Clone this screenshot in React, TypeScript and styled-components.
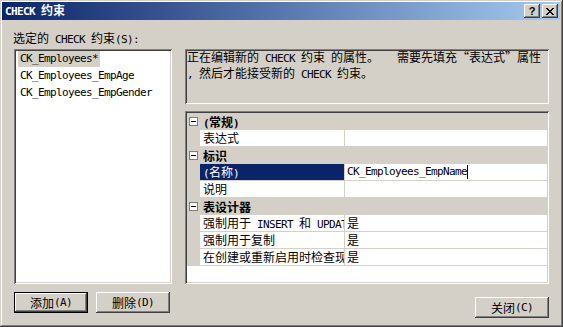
import React from 'react';
import styled, { createGlobalStyle } from 'styled-components';

const GlobalStyle = createGlobalStyle`
  html, body {
    margin: 0;
    padding: 0;
    background: #d4d0c8;
  }
  body {
    font-family: "Noto Sans CJK SC", "Liberation Sans", sans-serif;
    font-size: 12px;
    color: #000;
  }
`;

// Win2000 bevels
const sunken = `
  box-shadow: inset 1px 1px #808080, inset -1px -1px #ffffff,
    inset 2px 2px #404040, inset -2px -2px #d4d0c8;
`;
const raised = `
  box-shadow: inset -1px -1px #404040, inset 1px 1px #ffffff,
    inset -2px -2px #808080, inset 2px 2px #d4d0c8;
`;

const monoFont = `
  font-family: "DejaVu Sans Mono", "Liberation Mono", monospace;
  font-size: 11px;
  letter-spacing: -0.62px;
`;

const Window = styled.div`
  width: 563px;
  height: 327px;
  box-sizing: border-box;
  padding: 2px 3px 3px 2px;
  background: #d4d0c8;
  box-shadow: inset -1px -1px #404040, inset 1px 1px #d4d0c8,
    inset -2px -2px #808080, inset 2px 2px #ffffff;
  display: flex;
  flex-direction: column;
  overflow: hidden;
`;

const TitleBar = styled.div`
  height: 18px;
  display: flex;
  align-items: center;
  padding: 0 2px 0 3px;
  background: linear-gradient(to right, #0a246a, #a6caf0);
  color: #fff;
  font-weight: bold;
  line-height: 18px;
`;

const TitleText = styled.div`
  flex: 1;
  white-space: nowrap;
`;

const CaptionButton = styled.div`
  width: 16px;
  height: 14px;
  box-sizing: border-box;
  background: #d4d0c8;
  ${raised}
  display: flex;
  align-items: center;
  justify-content: center;
  color: #000;
  margin-left: 2px;
  font-family: "Liberation Sans", sans-serif;
  font-size: 11px;
  font-weight: bold;
  line-height: 14px;
`;

const Latin = styled.span<{ $bold?: boolean }>`
  ${monoFont}
  white-space: pre;
  font-weight: ${(p) => (p.$bold ? 'bold' : 'normal')};
`;

const Body = styled.div`
  flex: 1;
  display: flex;
  flex-direction: column;
  padding: 11px 11px 0 12px;
`;

const Label = styled.div`
  height: 14px;
  line-height: 14px;
  margin-left: -1px;
  margin-bottom: 4px;
  white-space: nowrap;
`;

const Columns = styled.div`
  display: flex;
  gap: 13px;
`;

const LeftColumn = styled.div`
  width: 158px;
  display: flex;
  flex-direction: column;
`;

const RightColumn = styled.div`
  width: 364px;
  display: flex;
  flex-direction: column;
`;

const ListBox = styled.div`
  height: 235px;
  box-sizing: border-box;
  background: #fff;
  ${sunken}
  padding: 2px 4px;
  ${monoFont}
`;

const ListItem = styled.div<{ $selected?: boolean }>`
  display: table;
  height: 16px;
  line-height: 16px;
  padding: 0 2px;
  margin-bottom: 1px;
  background: ${(p) => (p.$selected ? '#d4d0c8' : 'transparent')};
  white-space: nowrap;
`;

const ButtonRow = styled.div<{ $align?: string }>`
  display: flex;
  gap: 8px;
  justify-content: ${(p) => p.$align || 'flex-start'};
  margin-top: ${(p) => (p.$align ? '13px' : '8px')};
`;

const Button = styled.div<{ $default?: boolean }>`
  width: 74px;
  height: 21px;
  box-sizing: border-box;
  display: flex;
  align-items: center;
  justify-content: center;
  background: #d4d0c8;
  ${(p) =>
    p.$default
      ? `box-shadow: inset 0 0 0 1px #000, inset -2px -2px #404040, inset 2px 2px #ffffff,
    inset -3px -3px #808080;`
      : raised}
  white-space: nowrap;
`;

const DescBox = styled.div`
  height: 55px;
  box-sizing: border-box;
  ${sunken}
  padding: 1px 2px 0 2px;
  line-height: 14px;
  white-space: nowrap;
`;

const Grid = styled.div`
  height: 173px;
  box-sizing: border-box;
  margin-top: 7px;
  background: #fff;
  ${sunken}
  padding: 2px 2px 2px 2px;
  display: grid;
  grid-template-columns: 13px 145px 1fr;
  grid-auto-rows: 17px;
  overflow: hidden;
`;

const CategoryCell = styled.div`
  grid-column: 2 / 4;
  background: #d4d0c8;
  font-weight: bold;
  line-height: 17px;
  padding-left: 3px;
  white-space: nowrap;
`;

const Gutter = styled.div`
  background: #d4d0c8;
  display: flex;
  align-items: center;
  justify-content: center;
`;

const Expander = styled.div`
  width: 9px;
  height: 9px;
  box-sizing: border-box;
  border: 1px solid #808080;
  background: #fff;
  position: relative;
  &::after {
    content: '';
    position: absolute;
    left: 1px;
    right: 1px;
    top: 3px;
    height: 1px;
    background: #000;
  }
`;

const NameCell = styled.div<{ $selected?: boolean }>`
  box-sizing: border-box;
  border-right: 1px solid #d4d0c8;
  border-bottom: 1px solid #d4d0c8;
  padding-left: 3px;
  line-height: 16px;
  white-space: nowrap;
  overflow: hidden;
  background: ${(p) => (p.$selected ? '#0a246a' : '#fff')};
  color: ${(p) => (p.$selected ? '#fff' : '#000')};
`;

const ValueCell = styled.div`
  box-sizing: border-box;
  border-bottom: 1px solid #d4d0c8;
  padding-left: 2px;
  line-height: 16px;
  white-space: nowrap;
  overflow: hidden;
  display: flex;
  align-items: center;
`;

const Caret = styled.span`
  display: inline-block;
  width: 1px;
  height: 14px;
  background: #000;
`;

type Row =
  | { kind: 'cat'; label: React.ReactNode }
  | { kind: 'prop'; name: React.ReactNode; value?: React.ReactNode; selected?: boolean };

const rows: Row[] = [
  { kind: 'cat', label: <><Latin $bold>(</Latin>常规<Latin $bold>)</Latin></> },
  { kind: 'prop', name: '表达式' },
  { kind: 'cat', label: '标识' },
  {
    kind: 'prop',
    name: <><Latin>(</Latin>名称<Latin>)</Latin></>,
    value: <><Latin>CK_Employees_EmpName</Latin><Caret /></>,
    selected: true,
  },
  { kind: 'prop', name: '说明' },
  { kind: 'cat', label: '表设计器' },
  { kind: 'prop', name: <>强制用于<Latin> INSERT </Latin>和<Latin> UPDATE</Latin></>, value: '是' },
  { kind: 'prop', name: '强制用于复制', value: '是' },
  { kind: 'prop', name: '在创建或重新启用时检查现有数据', value: '是' },
];

export default function App() {
  return (
    <>
      <GlobalStyle />
      <Window>
        <TitleBar>
          <TitleText>
            <Latin $bold>CHECK </Latin>约束
          </TitleText>
          <CaptionButton>?</CaptionButton>
          <CaptionButton>
            <svg width="8" height="7" viewBox="0 0 8 7">
              <path d="M0 0 L7 7 M1 0 L8 7 M7 0 L0 7 M8 0 L1 7" stroke="#000" strokeWidth="1" />
            </svg>
          </CaptionButton>
        </TitleBar>
        <Body>
          <Label>
            选定的<Latin> CHECK </Latin>约束<Latin>(S):</Latin>
          </Label>
          <Columns>
            <LeftColumn>
              <ListBox>
                <ListItem $selected>CK_Employees*</ListItem>
                <ListItem>CK_Employees_EmpAge</ListItem>
                <ListItem>CK_Employees_EmpGender</ListItem>
              </ListBox>
              <ButtonRow>
                <Button $default>
                  添加<Latin>(A)</Latin>
                </Button>
                <Button>
                  删除<Latin>(D)</Latin>
                </Button>
              </ButtonRow>
            </LeftColumn>
            <RightColumn>
              <DescBox>
                <div>
                  正在编辑新的<Latin> CHECK </Latin>约束<Latin> </Latin>的属性。<Latin>   </Latin>需要先填充“表达式”属性
                </div>
                <div>
                  <Latin>, </Latin>然后才能接受新的<Latin> CHECK </Latin>约束。
                </div>
              </DescBox>
              <Grid>
                {rows.map((r, i) =>
                  r.kind === 'cat' ? (
                    <React.Fragment key={i}>
                      <Gutter>
                        <Expander />
                      </Gutter>
                      <CategoryCell>{r.label}</CategoryCell>
                    </React.Fragment>
                  ) : (
                    <React.Fragment key={i}>
                      <Gutter />
                      <NameCell $selected={r.selected}>{r.name}</NameCell>
                      <ValueCell>{r.value}</ValueCell>
                    </React.Fragment>
                  )
                )}
              </Grid>
              <ButtonRow $align="flex-end">
                <Button>
                  关闭<Latin>(C)</Latin>
                </Button>
              </ButtonRow>
            </RightColumn>
          </Columns>
        </Body>
      </Window>
    </>
  );
}
